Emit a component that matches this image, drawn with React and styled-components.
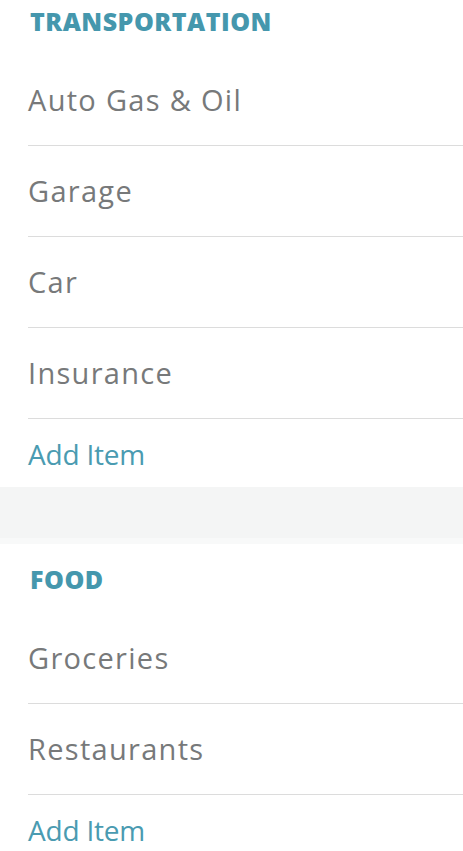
import React from 'react'
import styled, { createGlobalStyle } from 'styled-components';

const GlobalStyle = createGlobalStyle`
    html, body {
        margin: 0;
        padding: 0;
        background: #ffffff;
        overflow: hidden;
    }
    body {
        font-family: "Open Sans", "Liberation Sans", sans-serif;
        -webkit-font-smoothing: antialiased;
    }
`;

const PageStyled = styled.div`
    width: 463px;
    height: 851px;
    overflow: hidden;
    background: #ffffff;
`;

// page is scrolled a little, the first header is cut at the top
const ScrollStyled = styled.div`
    margin-top: -14px;
`;

const SectionStyled = styled.section`
    background: #ffffff;
`;

const GapStyled = styled.div`
    height: 51px;
    background: #f4f5f5;
    border-bottom: 6px solid #f8f9f9;
`;

const HeaderStyled = styled.h2`
    margin: 0;
    height: 69px;
    padding-left: 30px;
    display: flex;
    align-items: center;
    font-size: 25px;
    font-weight: 800;
    letter-spacing: 0.5px;
    text-transform: uppercase;
    color: #4597ad;
`;

const ListStyled = styled.ul`
    list-style: none;
    margin: 0;
    padding: 0 0 0 28px;
`;

const RowStyled = styled.li`
    height: 91px;
    display: flex;
    align-items: center;
    border-bottom: 1px solid #dcdcdc;
    font-size: 29px;
    letter-spacing: 1.3px;
    color: #77797a;
    padding-bottom: 2px;
    box-sizing: border-box;
`;

const AddRowStyled = styled.li`
    height: 68px;
    display: flex;
    align-items: center;
    font-size: 28px;
    letter-spacing: -0.2px;
    color: #4a9bb1;
    padding-top: 1px;
    box-sizing: border-box;
`;

const sections = [
    { title: 'Transportation', items: ['Auto Gas & Oil', 'Garage', 'Car', 'Insurance'] },
    { title: 'Food', items: ['Groceries', 'Restaurants'] },
];

function Section({ title, items }) {
    return (
        <SectionStyled>
            <HeaderStyled>{title}</HeaderStyled>
            <ListStyled>
                {items.map((item) => (
                    <RowStyled key={item}>{item}</RowStyled>
                ))}
                <AddRowStyled>Add Item</AddRowStyled>
            </ListStyled>
        </SectionStyled>
    )
}

export default function App() {
    return (
        <PageStyled>
            <GlobalStyle />
            <ScrollStyled>
                {sections.map((section, i) => (
                    <React.Fragment key={section.title}>
                        {i > 0 && <GapStyled />}
                        <Section {...section} />
                    </React.Fragment>
                ))}
            </ScrollStyled>
        </PageStyled>
    )
}
